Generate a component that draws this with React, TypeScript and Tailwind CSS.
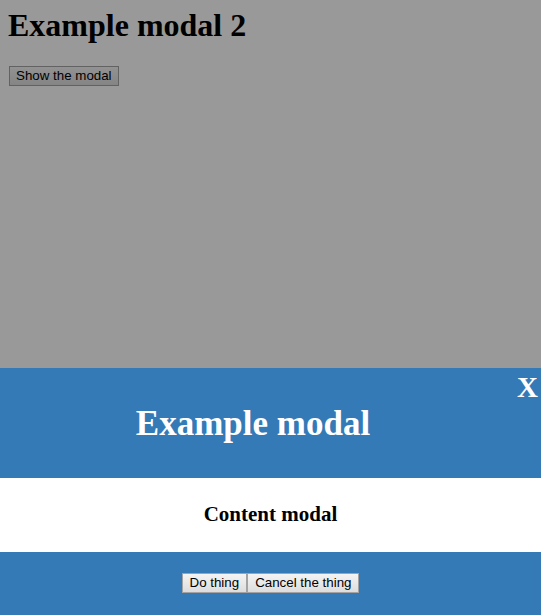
// Bottom sheet modal over a dimmed page

function WinButton({ label, wide }: { label: string; wide?: boolean }) {
  return (
    <button
      type="button"
      className={`h-[20px] border border-[#a3a3a3] bg-gradient-to-b from-[#f4f4f4] to-[#dddddd] text-[13.33px] leading-none text-black [font-family:Arial,'Liberation_Sans',sans-serif] ${
        wide ? 'px-[7px]' : 'px-[6px]'
      }`}
    >
      {label}
    </button>
  )
}

export default function App() {
  return (
    <div className="relative h-[615px] w-full overflow-hidden bg-white text-black [font-family:'Times_New_Roman','Liberation_Serif',serif]">
      <div className="px-2 pt-[9px]">
        <h1 className="text-[32px] font-bold leading-none">Example modal 2</h1>
        <div className="mt-[22px] ml-[1px]">
          <WinButton label="Show the modal" />
        </div>
      </div>

      {/* dim layer */}
      <div className="absolute inset-0 bg-black/40" />

      {/* modal, stuck to the bottom */}
      <div className="absolute bottom-0 left-0 right-0 flex flex-col">
        <div className="relative h-[110px] bg-[#337ab7] pr-[35px] pt-[38px] text-white">
          <h2 className="text-center text-[35px] font-bold leading-none">Example modal</h2>
          <span className="absolute right-[3px] top-[5px] text-[29px] font-bold leading-none">X</span>
        </div>
        <div className="h-[74px] bg-white pt-[26px]">
          <h3 className="text-center text-[21px] font-bold leading-none">Content modal</h3>
        </div>
        <div className="flex h-[63px] justify-center bg-[#337ab7] pt-[21px]">
          <WinButton label="Do thing" wide />
          <WinButton label="Cancel the thing" wide />
        </div>
      </div>
    </div>
  )
}
